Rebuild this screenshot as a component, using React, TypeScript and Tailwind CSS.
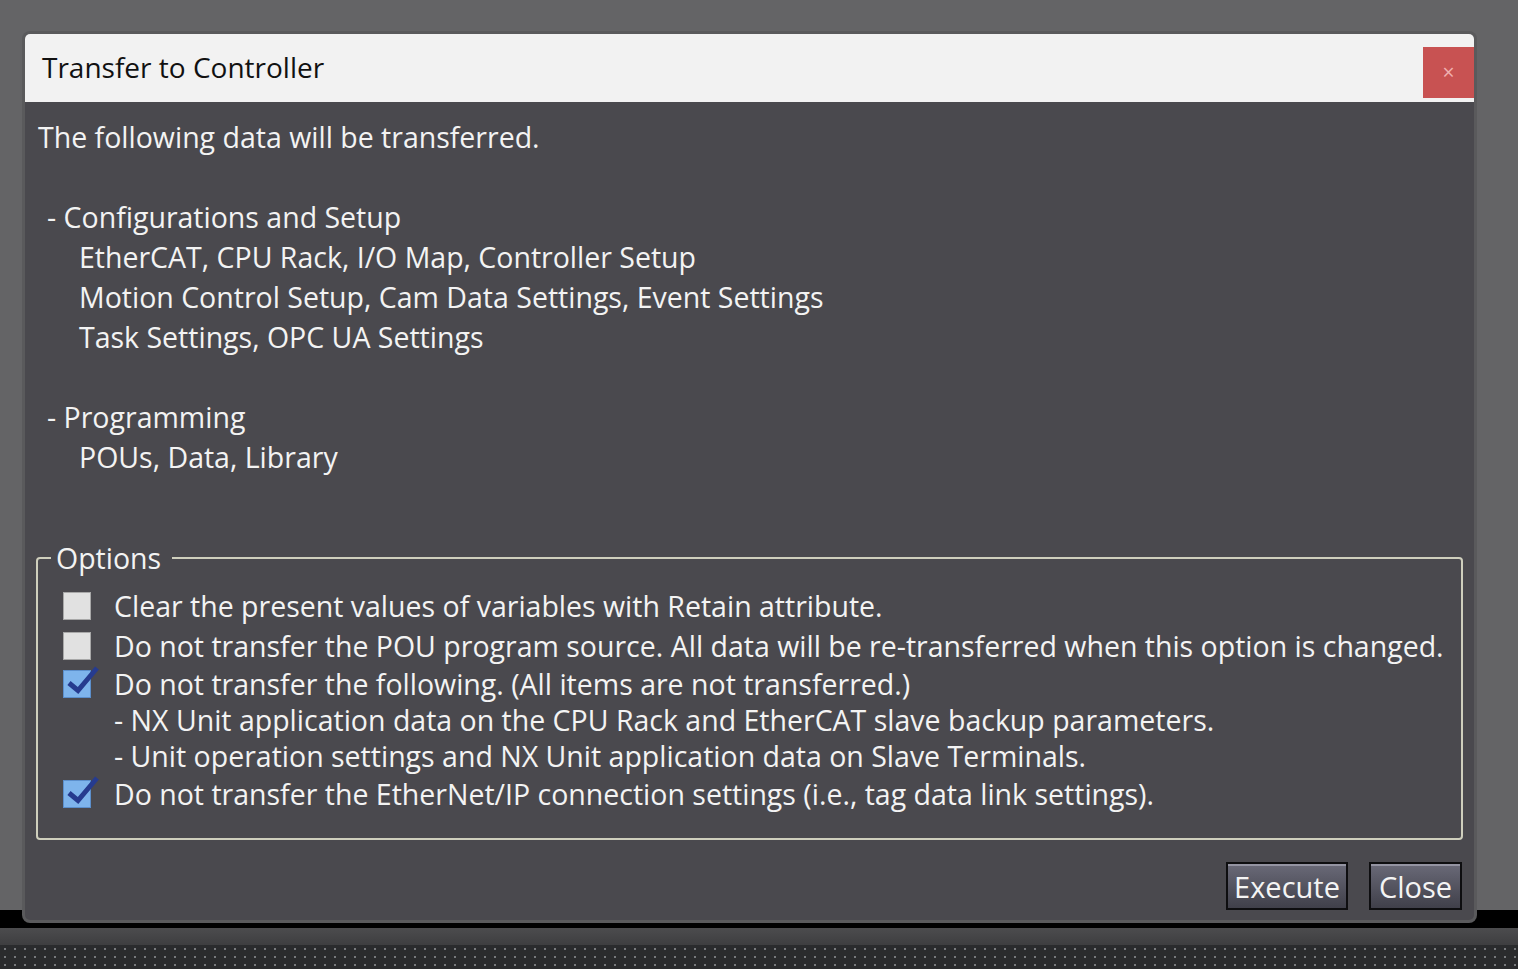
import React from 'react';

const font = { fontFamily: '"Open Sans", "Noto Sans", sans-serif' };

type Option = { label: string; checked: boolean; notes?: string[] };

const options: Option[] = [
  { label: 'Clear the present values of variables with Retain attribute.', checked: false },
  {
    label: 'Do not transfer the POU program source. All data will be re-transferred when this option is changed.',
    checked: false,
  },
  {
    label: 'Do not transfer the following. (All items are not transferred.)',
    checked: true,
    notes: [
      '- NX Unit application data on the CPU Rack and EtherCAT slave backup parameters.',
      '- Unit operation settings and NX Unit application data on Slave Terminals.',
    ],
  },
  { label: 'Do not transfer the EtherNet/IP connection settings (i.e., tag data link settings).', checked: true },
];

function CheckBox({ checked }: { checked: boolean }) {
  if (!checked) {
    return <div className="h-[28px] w-[28px] shrink-0 border border-[#a8a8a8] bg-[#e1e1e1]" />;
  }
  return (
    <div className="relative h-[28px] w-[28px] shrink-0 border border-[#5c8fcc] bg-[#7eb4ec]">
      {/* check mark pokes out past the top-right corner */}
      <svg className="absolute -left-px -top-px overflow-visible" width="28" height="28" viewBox="0 0 28 28">
        <path d="M6 13 L15 20.5 L34 -2" fill="none" stroke="#263b8f" strokeWidth="5" strokeLinejoin="miter" />
      </svg>
    </div>
  );
}

function DlgButton({ children, w }: { children: React.ReactNode; w: string }) {
  return (
    <button
      type="button"
      className={`${w} h-[48px] border-2 border-[#0e0e10] bg-gradient-to-b from-[#6a6a78] to-[#40404a] text-[29px] leading-none text-[#f4f4f4] shadow-[inset_0_2px_0_#9494a2]`}
    >
      {children}
    </button>
  );
}

export default function App() {
  return (
    <div className="relative flex h-[969px] w-full flex-col overflow-hidden bg-[#646466]" style={font}>
      {/* app behind the modal */}
      <div className="flex-1" />
      <div className="h-[18px] bg-black" />
      <div className="h-[17px] bg-gradient-to-b from-[#4c4c4e] to-[#3e3e40]" />
      <div className="h-[24px] bg-[#2a2b2d] bg-[radial-gradient(circle,#77797c_1px,transparent_1.5px)] bg-[length:10px_8px]" />

      {/* Transfer to Controller dialog */}
      <div className="absolute left-[25px] top-[34px] flex h-[886px] w-[1449px] flex-col overflow-hidden rounded-[5px] bg-[#4a494e] shadow-[0_0_0_3px_#5a5a5c]">
        <div className="flex h-[68px] shrink-0 items-start justify-between bg-[#f2f2f2]">
          <h1 className="pl-[17px] pt-[13px] text-[28px] leading-[40px] text-[#111]">Transfer to Controller</h1>
          <button
            type="button"
            className="mt-[13px] flex h-[51px] w-[51px] items-center justify-center bg-[#c85252] text-[21px] leading-none text-[#f0b0b0]"
          >
            ×
          </button>
        </div>

        <div className="flex flex-1 flex-col whitespace-nowrap px-[11px] pt-[15px] text-[28.5px] leading-[40px] text-[#f3f3f3]">
          <p className="pl-[2px]">The following data will be transferred.</p>
          <div className="h-[40px]" />
          <p className="pl-[11px]">- Configurations and Setup</p>
          <div className="pl-[43px]">
            <p>EtherCAT, CPU Rack, I/O Map, Controller Setup</p>
            <p>Motion Control Setup, Cam Data Settings, Event Settings</p>
            <p>Task Settings, OPC UA Settings</p>
          </div>
          <div className="h-[40px]" />
          <p className="pl-[11px]">- Programming</p>
          <p className="pl-[43px]">POUs, Data, Library</p>
          <div className="h-[61px]" />

          <fieldset className="min-w-0 rounded-[4px] border-2 border-[#cfcfbd] px-[25px] pb-[24px] pt-[8px]">
            <legend className="-ml-[12px] pl-[5px] pr-[11px] leading-[40px]">Options</legend>
            {options.map((o) => (
              <div key={o.label}>
                <div className={`flex items-center gap-[23px] ${o.notes ? 'h-[36px]' : 'h-[40px]'}`}>
                  <CheckBox checked={o.checked} />
                  <span>{o.label}</span>
                </div>
                {o.notes?.map((n) => (
                  <p key={n} className="pl-[51px] leading-[36px]">
                    {n}
                  </p>
                ))}
              </div>
            ))}
          </fieldset>

          <div className="mt-[22px] flex justify-end gap-[21px] pr-[1px]">
            <DlgButton w="w-[122px]">Execute</DlgButton>
            <DlgButton w="w-[93px]">Close</DlgButton>
          </div>
        </div>
      </div>
    </div>
  );
}
